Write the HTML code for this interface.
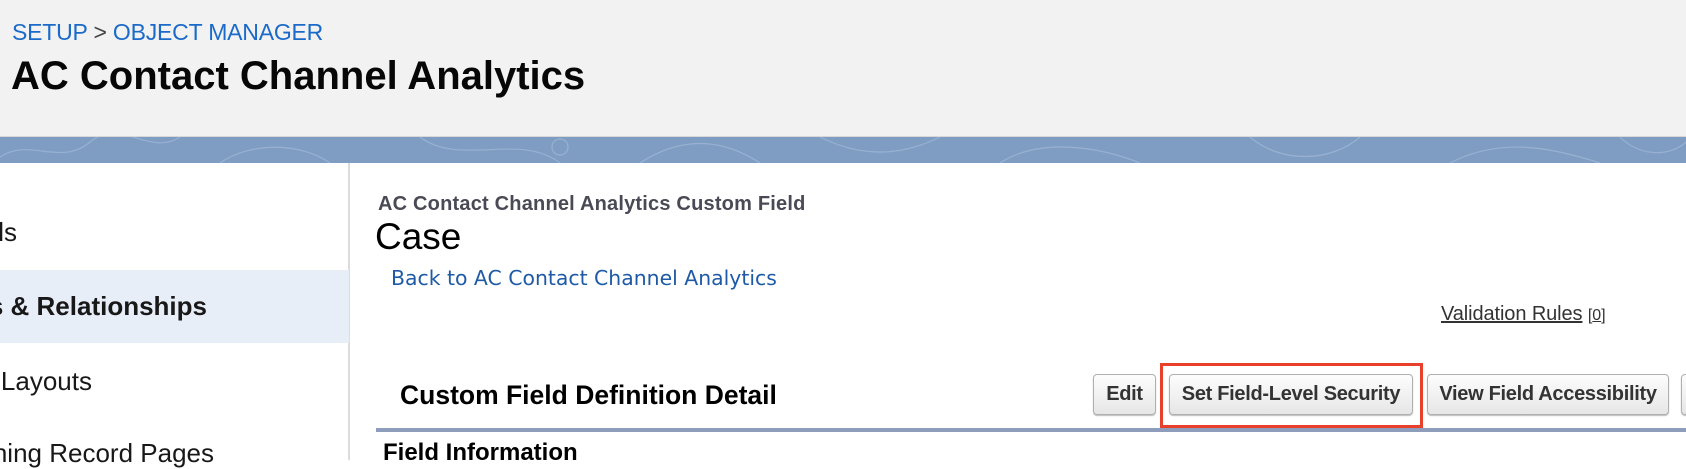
<!DOCTYPE html>
<html><head><style>
*{margin:0;padding:0;box-sizing:border-box}
body{width:1686px;height:460px;overflow:hidden;background:#fff;font-family:"Liberation Sans",Arial,sans-serif;position:relative}
.a{position:absolute;white-space:nowrap}
#hdr{left:0;top:0;width:1686px;height:137px;background:#f2f2f2;border-bottom:1px solid #d8d8d8}
#band{left:0;top:137px;width:1686px;height:26px;background:#7f9dc3}
#side{left:0;top:163px;width:350px;height:297px;border-right:2px solid #dcdcdc;background:#fff}
.sel{left:0;top:270px;width:349px;height:73px;background:#e8eef8}
.si{font-size:26px;color:#181818}
.btn{top:374px;height:41px;border:1px solid #b0b0b0;border-radius:4px;background:linear-gradient(#fdfdfd,#e6e6e6);font-weight:bold;font-size:20px;letter-spacing:-0.3px;color:#333;text-align:center;line-height:39px;box-shadow:0 1px 1px #bbb}
</style></head><body>
<div class="a" id="hdr"></div>
<div class="a" style="left:12px;top:19px;font-size:23px;color:#1b6ac9;letter-spacing:-0.2px">SETUP <span style="color:#444">&gt;</span> OBJECT MANAGER</div>
<div class="a" style="left:11px;top:54px;font-size:40px;font-weight:bold;color:#080707">AC Contact Channel Analytics</div>
<div class="a" id="band"><svg width="1686" height="26" style="display:block"><g fill="none" stroke="#9fb6d4" stroke-width="1.2" opacity="0.8"><path d="M0 20 C30 0 60 30 90 5 S150 20 180 0"/><path d="M220 26 C250 5 300 5 330 26"/><path d="M420 0 C460 30 520 -5 560 26"/><path d="M640 26 C680 0 720 0 760 26"/><circle cx="560" cy="10" r="8"/><path d="M820 0 C860 20 900 20 940 0"/><path d="M1000 26 C1040 0 1100 10 1140 26"/><path d="M1250 0 C1280 26 1330 26 1360 0"/><path d="M1450 26 C1500 0 1550 10 1600 26"/><path d="M1620 0 C1640 20 1670 20 1686 5"/></g></svg></div>
<div class="a" id="side"></div>
<div class="a sel"></div>
<div class="a si" style="right:1669px;top:217px">Details</div>
<div class="a si" style="right:1479px;top:291px;font-weight:bold">Fields &amp; Relationships</div>
<div class="a si" style="right:1594px;top:366px">Page Layouts</div>
<div class="a si" style="right:1472px;top:438px">Lightning Record Pages</div>
<div class="a" style="left:378px;top:193px;font-size:20px;font-weight:bold;color:#4a4a56;letter-spacing:0.2px">AC Contact Channel Analytics Custom Field</div>
<div class="a" style="left:375px;top:216px;font-size:37px;color:#000">Case</div>
<div class="a" style="left:391px;top:266px;font-size:20.4px;font-family:'DejaVu Sans',sans-serif;color:#1f5aa6">Back to AC Contact Channel Analytics</div>
<div class="a" style="left:1441px;top:303px;font-size:20px;color:#333;letter-spacing:-0.1px"><span style="text-decoration:underline">Validation Rules</span> <span style="font-size:16px">[<u>0</u>]</span></div>
<div class="a" style="left:400px;top:380px;font-size:26.5px;font-weight:bold;color:#000">Custom Field Definition Detail</div>
<div class="a btn" style="left:1093px;width:63px">Edit</div>
<div class="a btn" style="left:1169px;width:244px">Set Field-Level Security</div>
<div class="a btn" style="left:1427px;width:242px">View Field Accessibility</div>
<div class="a btn" style="left:1681px;width:40px"></div>
<div class="a" style="left:1160px;top:363px;width:263px;height:65px;border:3px solid #e8402a"></div>
<div class="a" style="left:376px;top:428px;width:1310px;height:4px;background:#8e9dbb"></div>
<div class="a" style="left:383px;top:439px;font-size:24px;font-weight:bold;color:#000">Field Information</div>
</body></html>
